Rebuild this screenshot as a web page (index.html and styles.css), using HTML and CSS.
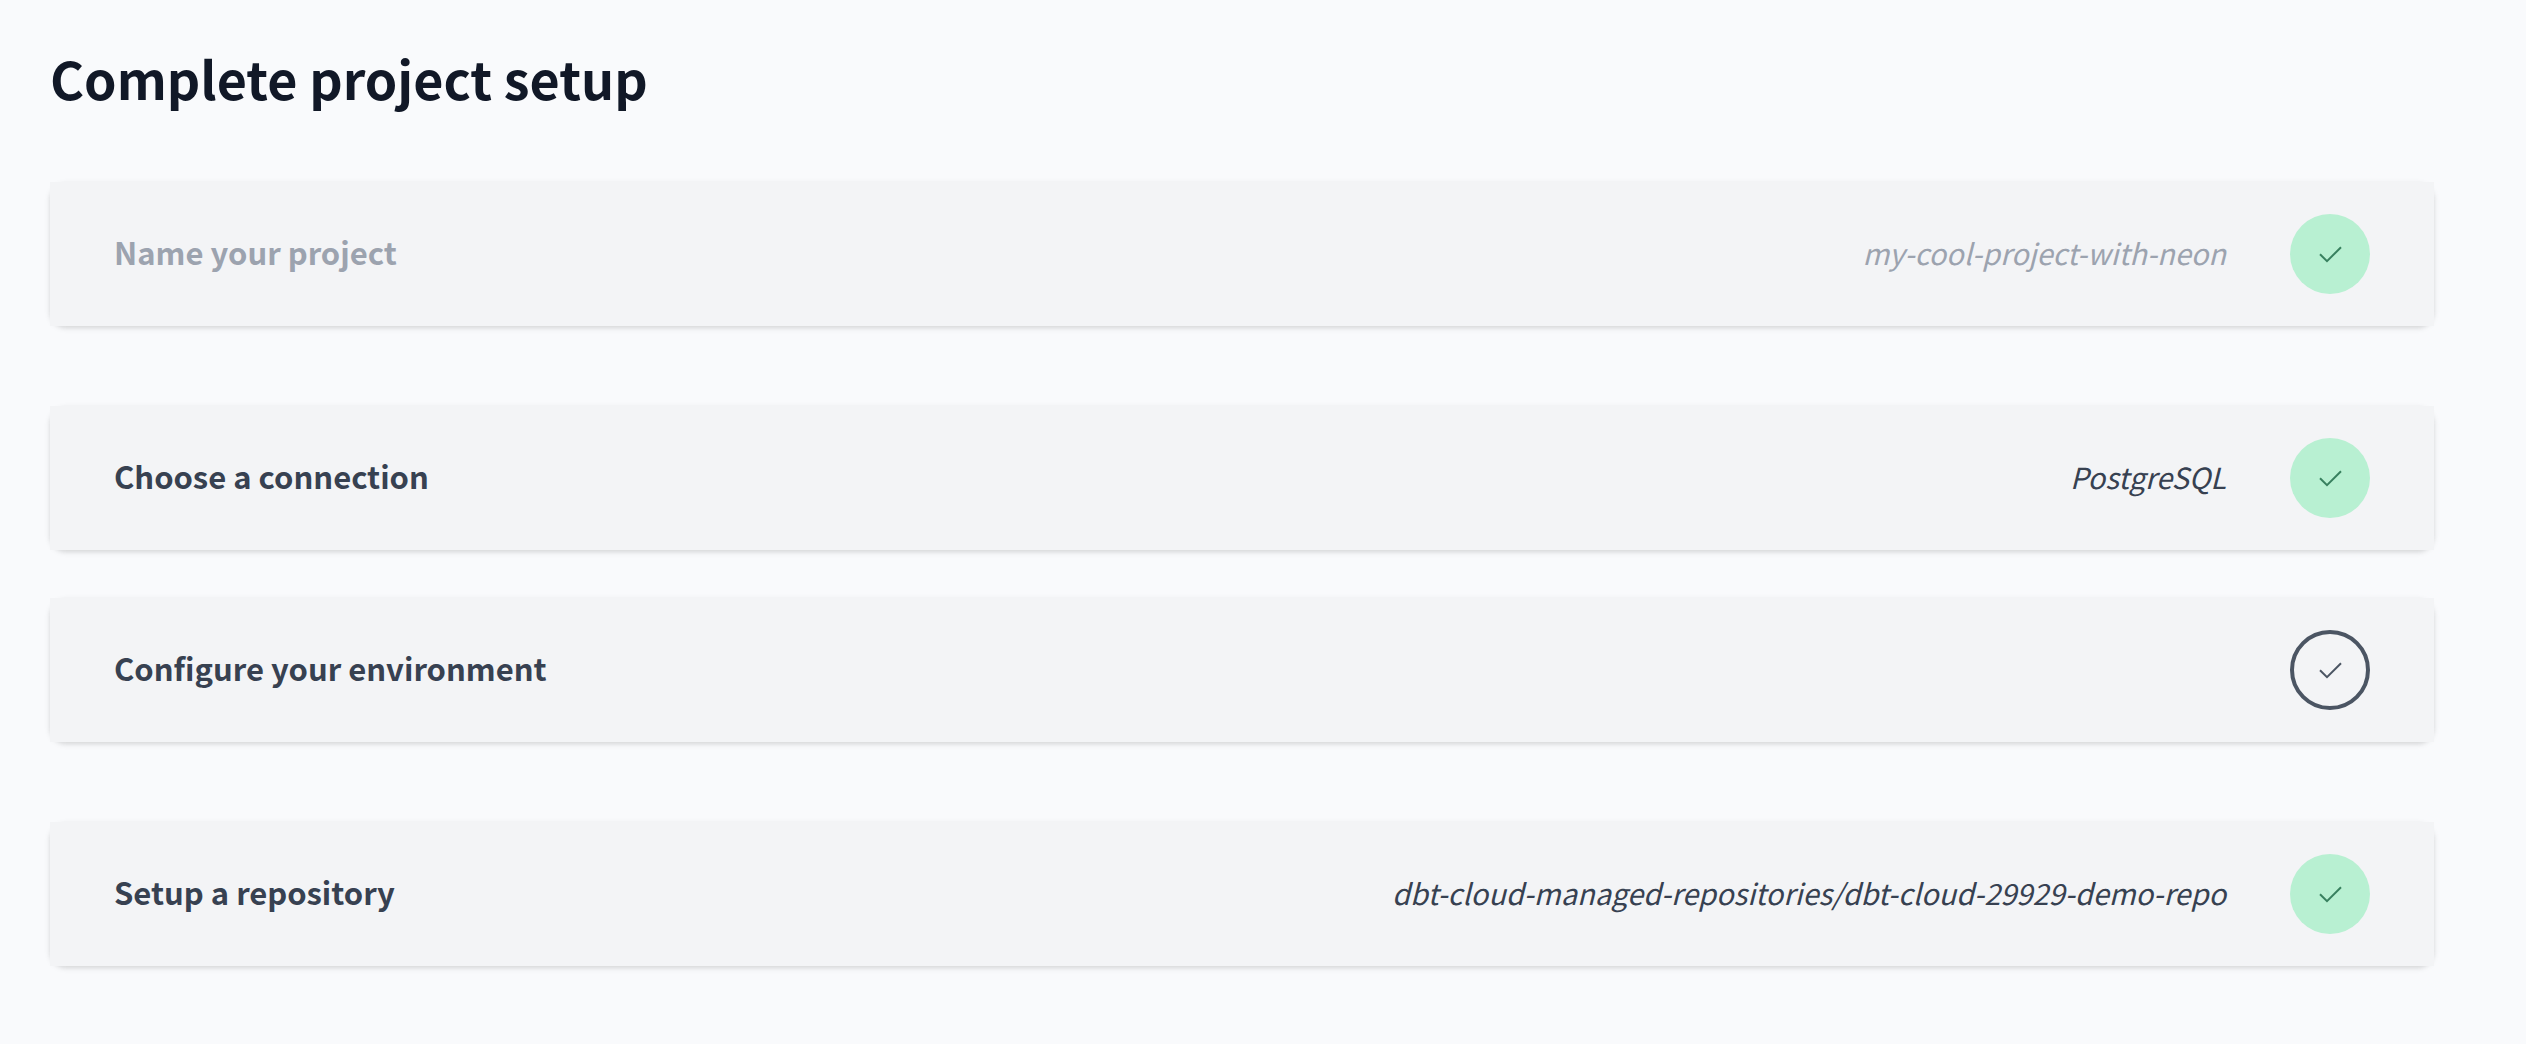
FILE: index.html
```html
<!DOCTYPE html>
<html lang="en">
<head>
<meta charset="utf-8">
<meta name="viewport" content="width=device-width, initial-scale=1">
<title>Complete project setup</title>
<link rel="stylesheet" href="styles.css">
</head>
<body>
<svg class="sprite" aria-hidden="true">
  <symbol id="check" viewBox="0 0 24 24"><path d="M2 12.2 L9 19.2 L23 5.2"/></symbol>
</svg>
<main class="page">
  <h1 class="title">Complete project setup</h1>
  <ol class="steps">
    <li class="step">
      <div class="step-body step-muted">
        <h2 class="step-name">Name your project</h2>
        <span class="step-value">my-cool-project-with-neon</span>
        <span class="badge badge-done"><svg class="icon" role="img" aria-label="Done"><use href="#check"/></svg></span>
      </div>
    </li>
    <li class="step step-spaced">
      <div class="step-body">
        <h2 class="step-name">Choose a connection</h2>
        <span class="step-value">PostgreSQL</span>
        <span class="badge badge-done"><svg class="icon" role="img" aria-label="Done"><use href="#check"/></svg></span>
      </div>
    </li>
    <li class="step">
      <div class="step-body">
        <h2 class="step-name">Configure your environment</h2>
        <span class="badge badge-open"><svg class="icon" role="img" aria-label="Open"><use href="#check"/></svg></span>
      </div>
    </li>
    <li class="step step-spaced">
      <div class="step-body">
        <h2 class="step-name">Setup a repository</h2>
        <span class="step-value">dbt-cloud-managed-repositories/dbt-cloud-29929-demo-repo</span>
        <span class="badge badge-done"><svg class="icon" role="img" aria-label="Done"><use href="#check"/></svg></span>
      </div>
    </li>
  </ol>
</main>
</body>
</html>
```
FILE: styles.css
```css
* {
  box-sizing: border-box;
}

body {
  margin: 0;
  background: #f9fafc;
  color: #374151;
  font-family: "Source Sans Pro", "Noto Sans CJK SC", sans-serif;
}

.sprite {
  position: absolute;
  width: 0;
  height: 0;
}

.page {
  padding: 40px 92px 40px 50px;
}

.title {
  margin: 0 0 66px;
  color: #111827;
  font-size: 52px;
  font-weight: 600;
  line-height: 76px;
}

.steps {
  margin: 0;
  padding: 0;
  list-style: none;
}

.step {
  margin-bottom: 48px;
  border-radius: 16px;
  box-shadow: 0 2px 6px rgba(0, 0, 0, 0.1), 0 2px 4px rgba(0, 0, 0, 0.06);
}

.step-spaced {
  margin-top: 80px;
}

.step-body {
  display: flex;
  align-items: center;
  gap: 64px;
  padding: 32px 64px;
  background: #f3f4f6;
}

.step-muted {
  color: #9ca3af;
}

.step-name,
.step-value {
  padding-bottom: 4px;
  line-height: 48px;
}

.step-name {
  margin: 0 auto 0 0;
  font-size: 31px;
  font-weight: 600;
}

.step-value {
  font-size: 29px;
  font-style: italic;
}

.badge {
  display: flex;
  flex: none;
  align-items: center;
  justify-content: center;
  width: 80px;
  height: 80px;
  border-radius: 50%;
}

.badge-done {
  background: #b8f0d2;
  color: #38805f;
}

.badge-open {
  border: 4px solid #4b5563;
  color: #4b5563;
}

.icon {
  width: 24px;
  height: 24px;
  fill: none;
  stroke: currentColor;
  stroke-width: 2;
}
```
